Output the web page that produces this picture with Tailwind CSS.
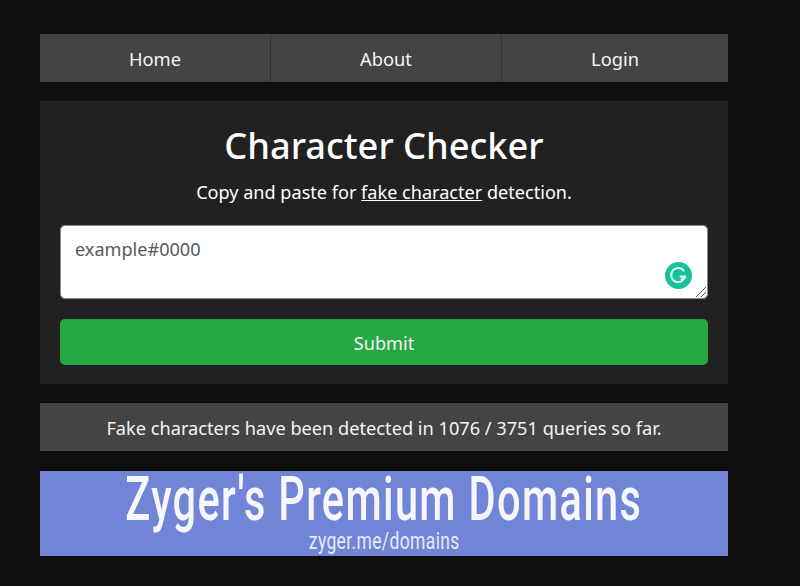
<!DOCTYPE html>
<html lang="en">
<head>
  <meta charset="UTF-8" />
  <meta name="viewport" content="width=device-width, initial-scale=1.0" />
  <title>Character Checker</title>
  <script src="https://cdn.jsdelivr.net/npm/@tailwindcss/browser@4"></script>
</head>
<body class="bg-[#0f0f0f] min-h-screen overflow-hidden font-['Noto_Sans','Open_Sans',sans-serif] text-white">
  <div class="w-[688px] ml-10 pt-[34px]">
    <!-- nav -->
    <nav class="grid grid-cols-[231px_231px_226px] h-12 bg-[#444444] text-[18.3px] text-[#f4f4f4]">
      <a class="flex items-center justify-center pt-[2px] border-r border-[#333333]">Home</a>
      <a class="flex items-center justify-center pt-[2px] border-r border-[#333333]">About</a>
      <a class="flex items-center justify-center pt-[2px]">Login</a>
    </nav>

    <!-- checker -->
    <main class="mt-[19px] h-[283px] bg-[#212121] px-5 pt-[19px] text-center">
      <h1 class="text-[36.2px] leading-[50px] font-medium">Character Checker</h1>
      <p class="mt-[8px] text-[18.1px] leading-[28px]">Copy and paste for <a class="underline">fake character</a> detection.</p>
      <div class="relative mt-[19px] h-[74px] bg-white rounded-[5px] border border-[#8a8a8a] px-[14px] py-[9px] text-left text-[18.1px] leading-[28px] text-[#555b61]">
        example#0000
        <span class="absolute right-[15px] bottom-[9px] w-[27px] h-[27px] rounded-full bg-[#15c39a] flex items-center justify-center">
          <svg width="19" height="19" viewBox="0 0 19 19" fill="none" stroke="#dff7f0" stroke-width="2">
            <path d="M15 5.2A7 7 0 1 0 16 10.5H10.5" />
            <path d="M12 14l4-3.5" />
          </svg>
        </span>
        <svg class="absolute right-0 bottom-0" width="12" height="12" viewBox="0 0 12 12" stroke="#555555" stroke-width="1">
          <path d="M1 11L11 1M6 11l5-5" />
        </svg>
      </div>
      <button class="mt-5 w-full h-[46px] pt-[3px] bg-[#28a745] rounded-[5px] text-[18.1px] text-[#f2f2f2]">Submit</button>
    </main>

    <!-- stats -->
    <div class="mt-[19px] h-12 pt-[4px] bg-[#444444] flex items-center justify-center text-[18.2px] text-[#f4f4f4]">
      Fake characters have been detected in 1076 / 3751 queries so far.
    </div>

    <!-- banner -->
    <div class="mt-5 h-[85px] bg-[#7284d6] flex flex-col items-center font-['Roboto',sans-serif] text-[#f6f7fd]">
      <div class="text-[62px] leading-[56px] font-medium tracking-[2px] scale-x-[0.67] whitespace-nowrap">Zyger's Premium Domains</div>
      <div class="mt-[2px] text-[23px] leading-[25px] tracking-[0.5px] scale-x-[0.76] text-[#e8ebfa] whitespace-nowrap">zyger.me/domains</div>
    </div>
  </div>
</body>
</html>
